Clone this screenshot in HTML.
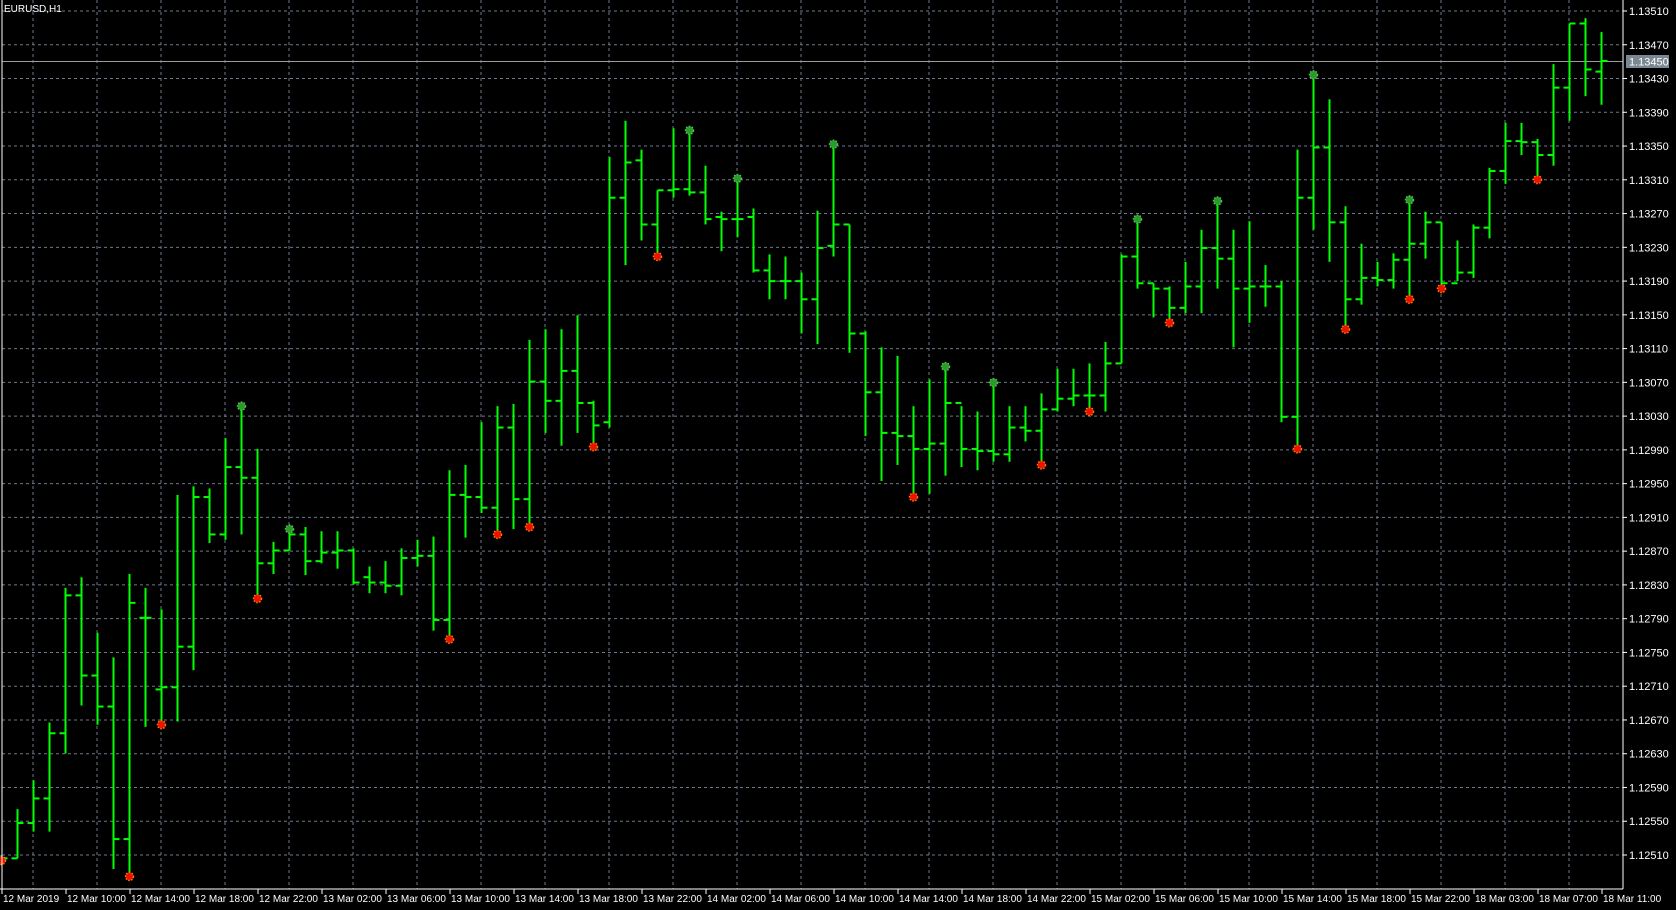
<!DOCTYPE html>
<html><head><meta charset="utf-8"><style>
html,body{margin:0;padding:0;background:#000;width:1676px;height:910px;overflow:hidden}
svg{display:block}
text{font-family:"Liberation Sans",sans-serif;font-size:11px;fill:#fff}
text.t{font-size:10px}
</style></head><body>
<svg id="s" width="1676" height="910" xmlns="http://www.w3.org/2000/svg"></svg>
<script>
const S=1676/1568;
const d=[
[800,805,803,803],[757,803,803,770],[730,778,770,747],[676,778,747,686],[550,705,686,557],
[540,660,557,632],[592,678,632,661],[615,813,661,785],[537,820,785,564],[550,680,578,578],
[570,678,645,643],[463,675,643,605],[455,627,605,465],[457,508,465,500],[410,505,500,437],
[380,500,437,447],[420,560,447,527],[507,537,527,515],[495,515,515,500],[493,538,500,525],
[497,527,525,517],[497,532,517,515],[513,547,515,545],[530,555,540,545],[525,555,545,548],
[513,557,548,522],[505,530,522,520],[502,590,520,580],[440,598,580,463],[435,503,463,465],
[395,480,465,475],[380,500,475,400],[378,495,400,467],[318,493,467,357],[308,405,357,375],
[308,417,375,347],[295,405,347,377],[375,418,377,398],[147,400,395,185],[113,248,185,152],
[140,225,150,210],[178,240,210,178],[120,185,178,177],[122,183,177,180],[155,210,180,205],
[198,235,203,205],[167,222,205,205],[195,255,203,253],[238,280,253,263],[240,280,263,263],
[255,312,263,280],[197,322,280,232],[135,240,230,210],[210,330,210,312],[310,408,312,367],
[325,450,367,405],[333,435,405,408],[380,465,408,420],[355,462,420,415],[343,445,415,377],
[380,437,377,420],[385,440,420,422],[358,432,422,425],[380,432,425,400],[380,413,400,403],
[368,435,403,383],[345,385,383,373],[345,380,373,370],[340,385,370,370],[320,385,370,340],
[238,340,340,240],[205,270,240,265],[265,297,265,270],[268,302,270,288],[245,293,288,268],
[215,293,268,232],[188,270,232,242],[215,325,242,270],[207,302,270,268],[248,287,268,268],
[263,395,268,390],[140,420,390,185],[70,215,185,138],[93,245,138,208],[193,308,208,280],
[228,285,280,260],[245,268,260,262],[237,270,262,243],[187,280,243,228],[198,242,228,208],
[208,270,208,265],[225,263,265,255],[210,260,255,213],[157,223,213,160],[115,172,160,132],
[115,145,132,133],[130,168,133,145],[60,155,145,82],[22,113,82,22],[17,90,22,65],[30,98,67,57]];
const green=[15,18,43,46,52,59,62,71,76,82,88];
const red=[0,8,10,16,28,31,33,37,41,57,65,68,73,81,84,88,90,96];
let o='';
const R=1623,B=889;
for(let x=33;x<R;x+=64)o+=`<line x1="${x}" y1="0" x2="${x}" y2="${B}" stroke="#6b7a8c" stroke-dasharray="3,3"/>`;
const labs=[];
for(let i=0;i<26;i++){const y=11+i*33.76;labs.push(y);o+=`<line x1="2" y1="${y}" x2="${R}" y2="${y}" stroke="#6b7a8c" stroke-dasharray="3,3"/>`;}
o+=`<line x1="2" y1="61.5" x2="${R}" y2="61.5" stroke="#9a9a9a"/>`;
d.forEach((b,k)=>{const x=1.5+16*k;const[h,l,op,c]=b.map(v=>v*S);
o+=`<line x1="${x}" y1="${h}" x2="${x}" y2="${l}" stroke="#00ff00" stroke-width="2"/>`;
o+=`<line x1="${x-6}" y1="${op}" x2="${x}" y2="${op}" stroke="#00ff00" stroke-width="2"/>`;
o+=`<line x1="${x}" y1="${c}" x2="${x+6}" y2="${c}" stroke="#00ff00" stroke-width="2"/>`;});
green.forEach(k=>{const x=1.5+16*k,y=d[k][0]*S;o+=`<circle cx="${x}" cy="${y}" r="4" fill="#2a9a2a" stroke="#55c055" stroke-width="1.5" stroke-dasharray="1.5,1.5"/>`;});
red.forEach(k=>{const x=1.5+16*k,y=d[k][1]*S;o+=`<circle cx="${x}" cy="${y}" r="4" fill="#ee1100" stroke="#ff7a00" stroke-width="1.5" stroke-dasharray="1.5,1.5"/>`;});
o+=`<line x1="2" y1="0" x2="2" y2="${B}" stroke="#fff"/><line x1="0" y1="${B}" x2="${R}" y2="${B}" stroke="#fff"/><line x1="${R}" y1="0" x2="${R}" y2="${B}" stroke="#fff"/>`;
labs.forEach((y,i)=>{const p=(1.13510-i*0.0004).toFixed(5);o+=`<line x1="${R}" y1="${y}" x2="${R+4}" y2="${y}" stroke="#fff"/><text x="${R+6}" y="${y+4}">${p}</text>`;});
o+=`<rect x="${R+3}" y="55" width="43" height="13" fill="#7b8793"/><text x="${R+6}" y="65.5">1.13450</text>`;
const tl=["12 Mar 2019","12 Mar 10:00","12 Mar 14:00","12 Mar 18:00","12 Mar 22:00","13 Mar 02:00","13 Mar 06:00","13 Mar 10:00","13 Mar 14:00","13 Mar 18:00","13 Mar 22:00","14 Mar 02:00","14 Mar 06:00","14 Mar 10:00","14 Mar 14:00","14 Mar 18:00","14 Mar 22:00","15 Mar 02:00","15 Mar 06:00","15 Mar 10:00","15 Mar 14:00","15 Mar 18:00","15 Mar 22:00","18 Mar 03:00","18 Mar 07:00","18 Mar 11:00"];
tl.forEach((t,j)=>{const x=2+64*j;o+=`<line x1="${x}" y1="${B}" x2="${x}" y2="${B+5}" stroke="#fff"/><text class="t" x="${x+1}" y="902">${t}</text>`;});
o+=`<text x="4" y="12" style="font-size:10px">EURUSD,H1</text>`;
document.getElementById('s').innerHTML=o;
</script>
</body></html>
